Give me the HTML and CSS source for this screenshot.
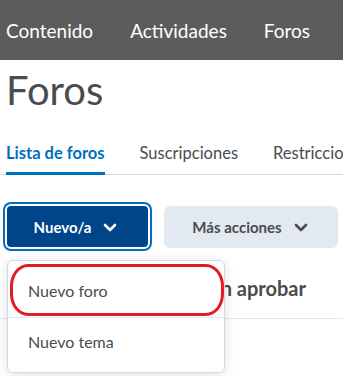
FILE: index.html
```html
<!DOCTYPE html>
<html lang="es">
<head>
<meta charset="utf-8">
<link rel="stylesheet" href="styles.css">
</head>
<body>
<nav class="nav">
  <span class="nav-item">Contenido</span>
  <span class="nav-item">Actividades</span>
  <span class="nav-item">Foros</span>
</nav>
<h1 class="title">Foros</h1>
<div class="tabs">
  <span class="tab tab-active">Lista de foros</span>
  <span class="tab">Suscripciones</span>
  <span class="tab">Restricciones</span>
</div>
<div class="actions">
  <button class="btn btn-primary">Nuevo/a
    <svg class="chev" width="14" height="9" viewBox="0 0 14 9"><path d="M2 2 L7 7 L12 2" fill="none" stroke="currentColor" stroke-width="2.6" stroke-linecap="round" stroke-linejoin="round"/></svg>
  </button>
  <button class="btn btn-secondary">Más acciones
    <svg class="chev" width="14" height="9" viewBox="0 0 14 9"><path d="M2 2 L7 7 L12 2" fill="none" stroke="currentColor" stroke-width="2.6" stroke-linecap="round" stroke-linejoin="round"/></svg>
  </button>
</div>
<div class="section">
  <h2 class="section-title">Temas sin aprobar</h2>
</div>
<div class="menu">
  <div class="menu-item">Nuevo foro</div>
  <div class="menu-item menu-item-sep">Nuevo tema</div>
</div>
<div class="highlight"></div>
</body>
</html>
```
FILE: styles.css
```css
html, body {
  margin: 0;
  padding: 0;
  background: #fff;
  overflow: hidden;
}
body {
  font-family: Lato, "Noto Sans", sans-serif;
  color: #494c4e;
  width: 343px;
  height: 376px;
  position: relative;
}
.nav {
  height: 60px;
  background: #5c5c5c;
  display: flex;
  align-items: center;
  gap: 37px;
  padding-left: 6px;
  white-space: nowrap;
}
.nav-item {
  color: #fff;
  font-size: 19px;
  line-height: 24px;
  padding-top: 1px;
}
.title {
  margin: 6px 0 0 6px;
  font-size: 40px;
  line-height: 48px;
  font-weight: 400;
  color: #494c4e;
}
.tabs {
  margin-top: 29px;
  display: flex;
  gap: 35px;
  padding-left: 6px;
  white-space: nowrap;
  border-bottom: 1px solid #d3d9e3;
}
.tab {
  font-size: 16.5px;
  line-height: 20px;
  padding-bottom: 9px;
  border-bottom: 3px solid transparent;
  margin-bottom: -1px;
}
.tab-active {
  color: #006fbf;
  font-weight: 700;
  border-bottom-color: #006fbf;
}
.actions {
  margin-top: 29px;
  padding-left: 5px;
  display: flex;
  align-items: center;
  gap: 14px;
}
.btn {
  font-family: Lato, "Noto Sans", sans-serif;
  font-weight: 700;
  font-size: 15px;
  display: flex;
  align-items: center;
  justify-content: center;
  gap: 12px;
  border-radius: 6px;
  padding: 0;
  cursor: pointer;
}
.btn-primary {
  width: 145px;
  height: 45px;
  background: #004489;
  color: #fff;
  border: 2px solid #fff;
  box-shadow: 0 0 0 2px #006fbf;
  padding-right: 4px;
}
.btn-secondary {
  width: 174px;
  height: 42px;
  background: #e3e9f1;
  color: #494c4e;
  border: none;
  padding-right: 2px;
}
.chev {
  display: block;
  margin-top: 1px;
}
.section {
  margin-top: 27px;
  border-bottom: 1px solid #e3e9f1;
  padding-bottom: 18px;
}
.section-title {
  margin: 0 0 0 146px;
  font-size: 20px;
  line-height: 24px;
  font-weight: 700;
  white-space: nowrap;
}
.menu {
  position: absolute;
  left: 7px;
  top: 260px;
  width: 216px;
  background: #fff;
  border: 1px solid #d3d9e3;
  border-radius: 6px;
  box-shadow: 0 2px 12px rgba(0, 0, 0, 0.12);
  padding: 6px 0 4px;
}
.menu-item {
  font-size: 16px;
  line-height: 20px;
  padding: 14px 0 16px 20px;
  color: #494c4e;
}
.menu-item-sep {
  border-top: 1px solid #e3e9f1;
}
.highlight {
  position: absolute;
  left: 10px;
  top: 264px;
  width: 208px;
  height: 46px;
  border: 3px solid #e31b23;
  border-radius: 18px / 22px;
}
```
